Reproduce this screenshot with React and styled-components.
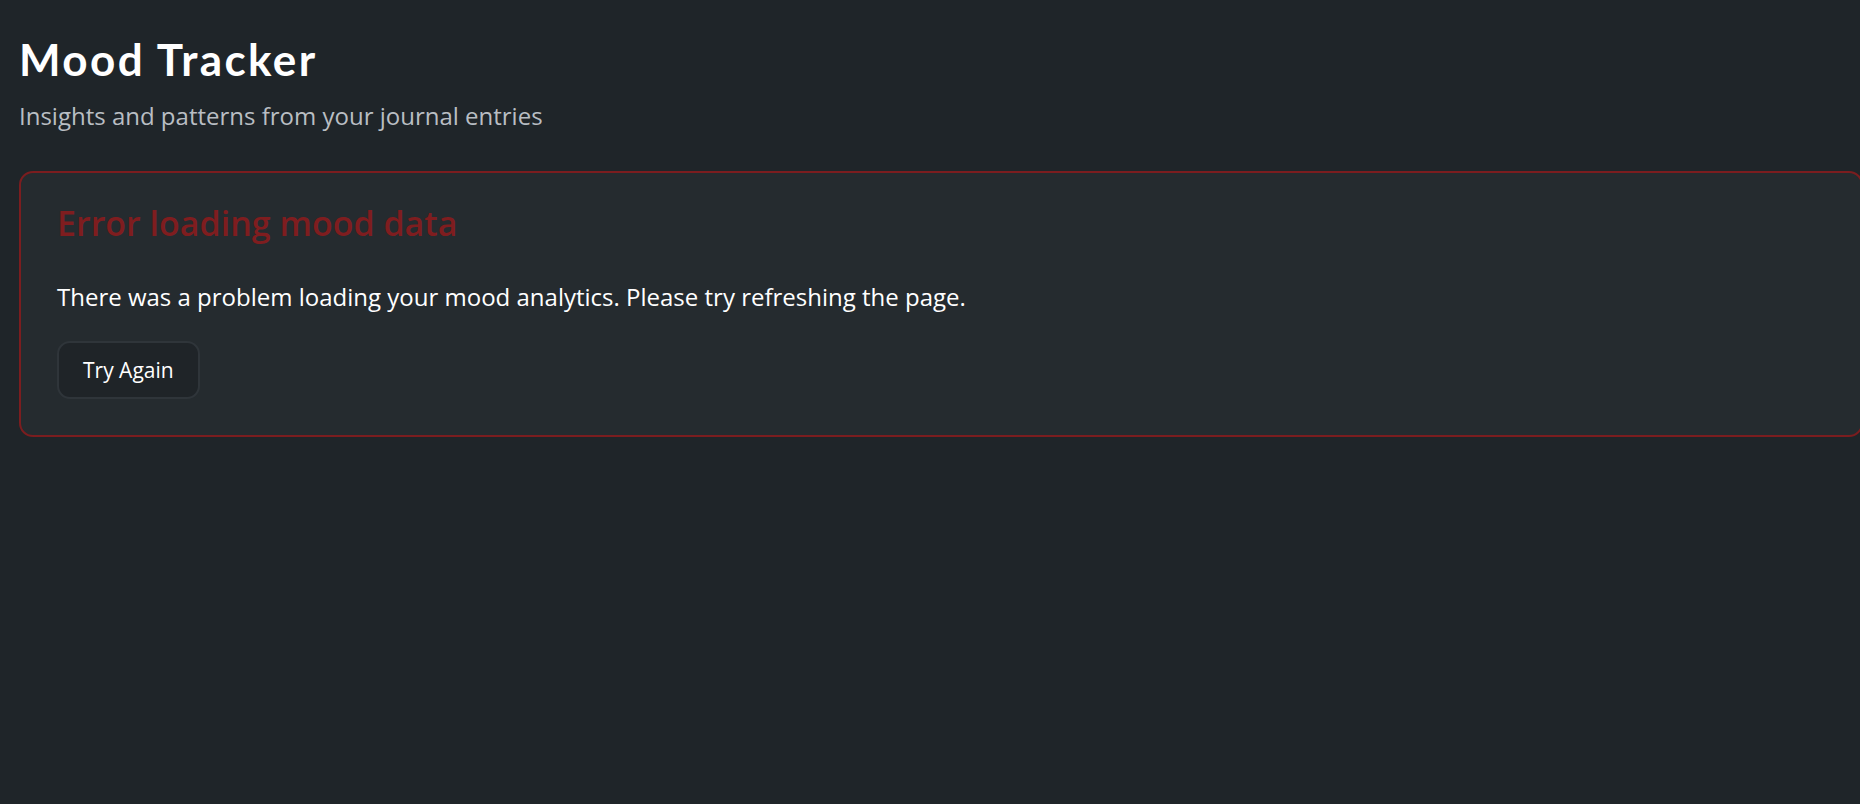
import styled, { createGlobalStyle } from 'styled-components';

const GlobalStyle = createGlobalStyle`
  html, body {
    margin: 0;
    padding: 0;
    background: #1f2529;
    overflow: hidden;
  }
  body {
    font-family: 'Open Sans', 'Liberation Sans', sans-serif;
  }
`;

const Page = styled.div`
  min-height: 100vh;
  padding: 33px 0 0 19px;
  box-sizing: border-box;
  background: #1f2529;
`;

const Header = styled.header`
  display: flex;
  flex-direction: column;
  gap: 14px;
  margin-bottom: 40px;
`;

const Title = styled.h1`
  margin: 0;
  font-family: 'Lato', 'Open Sans', sans-serif;
  font-weight: 700;
  font-size: 44px;
  letter-spacing: 2.4px;
  line-height: 1.2;
  color: #ffffff;
`;

const Subtitle = styled.p`
  margin: 0;
  font-size: 24px;
  line-height: 1.3;
  color: #b9bec3;
`;

const ErrorCard = styled.section`
  box-sizing: border-box;
  display: flex;
  flex-direction: column;
  align-items: flex-start;
  margin-right: -3px;
  padding: 30px 36px 36px;
  background: #252b2f;
  border: 2px solid #7b1d1f;
  border-radius: 14px;
`;

const ErrorTitle = styled.h2`
  margin: 0 0 35px;
  font-size: 34px;
  font-weight: 600;
  line-height: 1.2;
  color: #7f1d1f;
`;

const ErrorText = styled.p`
  margin: 0 0 26px;
  font-size: 24px;
  line-height: 1.5;
  color: #ffffff;
`;

const RetryButton = styled.button`
  font-family: 'Open Sans', sans-serif;
  font-size: 21px;
  font-weight: 500;
  color: #ffffff;
  background: #1f2428;
  border: 2px solid #2f353a;
  border-radius: 13px;
  padding: 0 24px;
  height: 58px;
  cursor: pointer;
`;

export default function App() {
  return (
    <Page>
      <GlobalStyle />
      <Header>
        <Title>Mood Tracker</Title>
        <Subtitle>Insights and patterns from your journal entries</Subtitle>
      </Header>
      <ErrorCard>
        <ErrorTitle>Error loading mood data</ErrorTitle>
        <ErrorText>
          There was a problem loading your mood analytics. Please try refreshing the page.
        </ErrorText>
        <RetryButton>Try Again</RetryButton>
      </ErrorCard>
    </Page>
  );
}
